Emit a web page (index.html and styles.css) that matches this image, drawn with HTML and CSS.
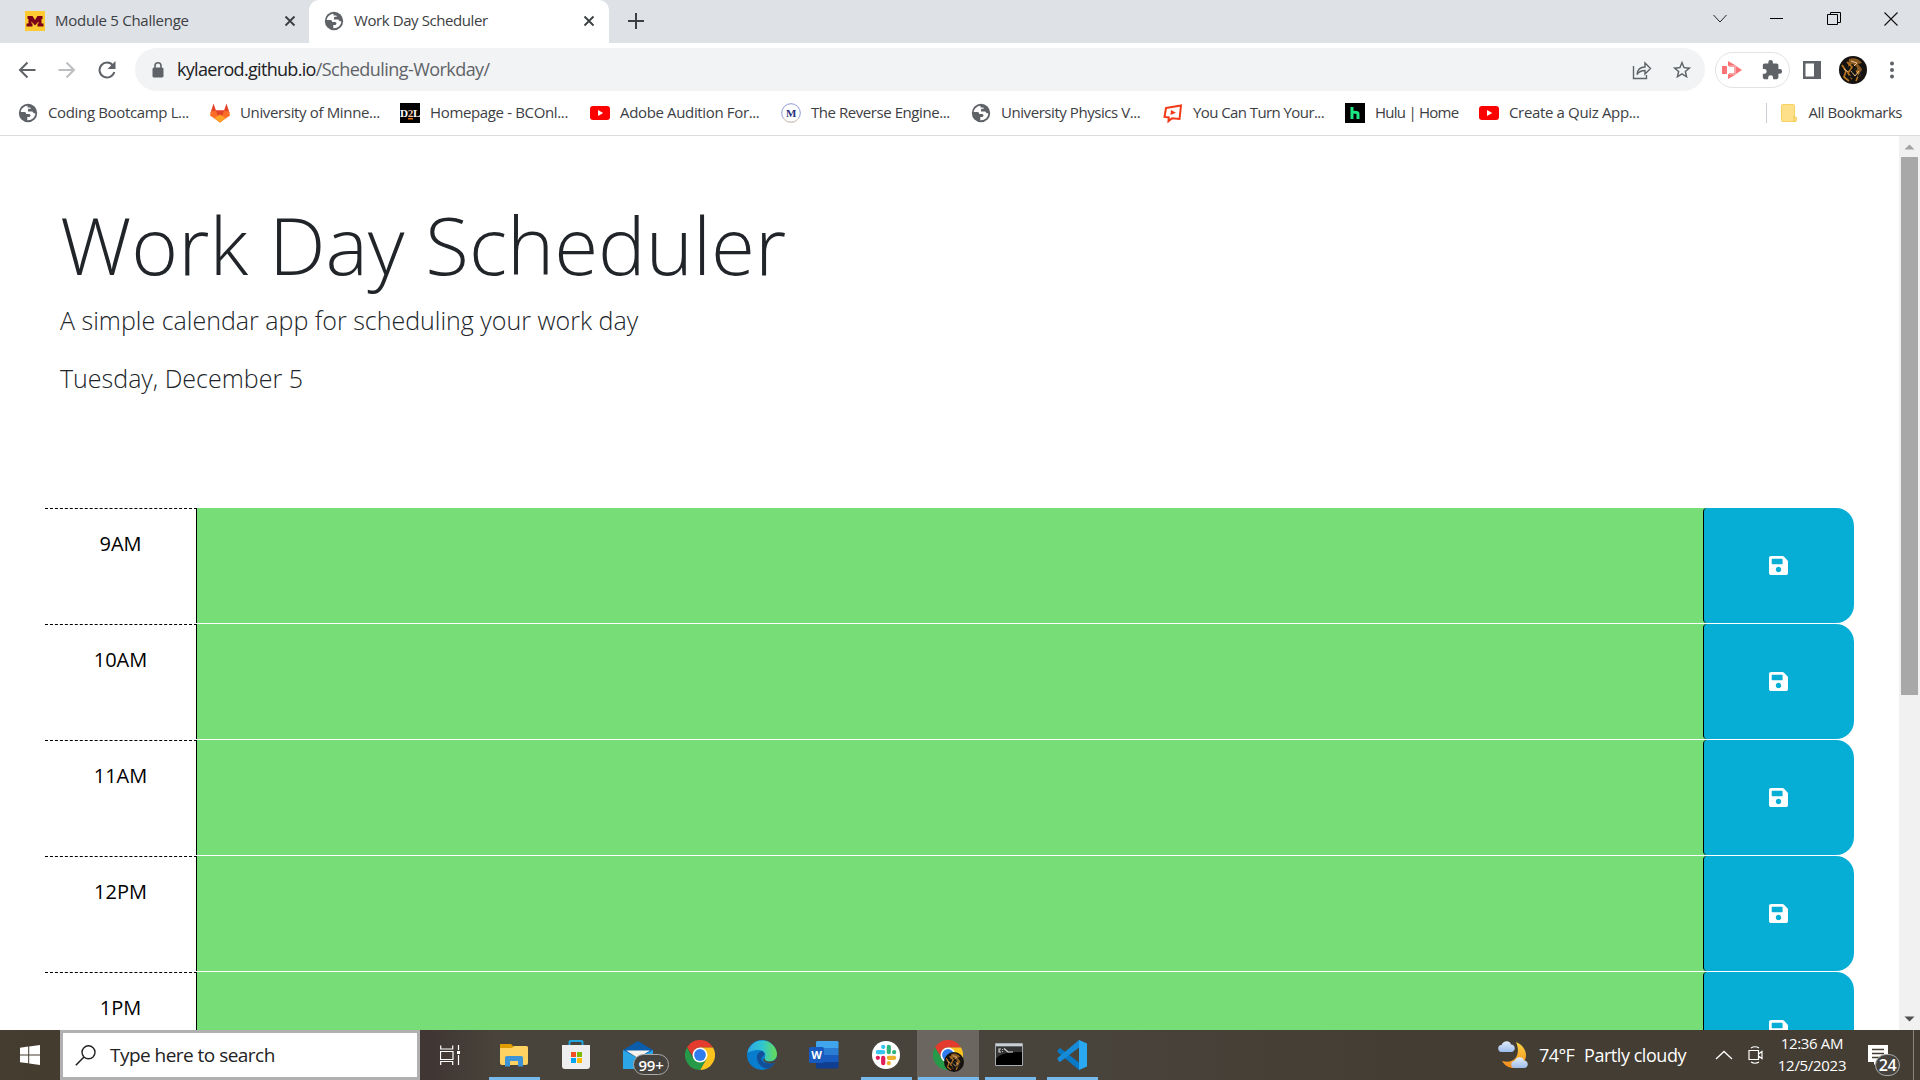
FILE: index.html
```html
<!DOCTYPE html>
<html lang="en">
<head>
<meta charset="utf-8">
<title>Work Day Scheduler</title>
<link rel="stylesheet" href="styles.css">
</head>
<body>
<svg class="defs" width="0" height="0" aria-hidden="true">
  <defs>
    <symbol id="globe" viewBox="0 0 20 20"><circle cx="10" cy="10" r="9.2" fill="#5f6368"/><path d="M9.5 2.700c-3.400.2-6.200 2.800-6.800 6.300h3.600c1.300 0 1.900.8 1.900 1.900h2.600c1 0 1.700.6 1.700 1.500s-.8 1.500-1.700 1.500h-1.500v3.300c4.500.3 7.900-3 8-7-.8.3-1.500.2-2-.4l-1-1.300H10V7c0-.8.5-1.200 1.300-1.200H13l-.8-1.400h-2.700z" fill="#fff"/></symbol>
    <symbol id="youtube" viewBox="0 0 20 20"><rect y="3" width="20" height="14" rx="3" fill="#f00"/><path d="M8 7v6l5.200-3z" fill="#fff"/></symbol>
    <symbol id="close" viewBox="0 0 12 12"><path d="M1.500 1.500l9 9m0-9l-9 9" stroke="#3c4043" stroke-width="1.900" fill="none"/></symbol>
    <symbol id="save" viewBox="0 32 448 448"><path fill="#fff" d="M433.941 129.941l-83.882-83.882A48 48 0 0 0 316.118 32H48C21.490 32 0 53.490 0 80v352c0 26.510 21.490 48 48 48h352c26.510 0 48-21.490 48-48V163.882a48 48 0 0 0-14.059-33.941zM224 416c-35.346 0-64-28.654-64-64s28.654-64 64-64 64 28.654 64 64-28.654 64-64 64zm96-304.520V212c0 6.627-5.373 12-12 12H76c-6.627 0-12-5.373-12-12V108c0-6.627 5.373-12 12-12h228.520c3.183 0 6.235 1.264 8.485 3.515l3.480 3.480A11.996 11.996 0 0 1 320 111.480z"/></symbol>
    <symbol id="chrome" viewBox="0 0 30 30"><path d="M2 7.500A15 15 0 0 1 28 7.500H15a7.500 7.500 0 0 0-6.500 3.750L8 16z" fill="#e33b2e"/><path d="M15 7.500h13A15 15 0 0 1 15 30l6.500-11.250z" fill="#fcc31e"/><path d="M2 7.500l6.500 11.250h13L15 30A15 15 0 0 1 2 7.500z" fill="#269a48"/><circle cx="15" cy="15" r="7.500" fill="#fff"/><circle cx="15" cy="15" r="5.900" fill="#2f7cf0"/></symbol>
    <symbol id="tiger" viewBox="0 0 28 28"><circle cx="14" cy="14" r="14" fill="#15120f"/><path d="M10 3c5-2 10 0 13 4l-4 1 4 5-2 8-4-5 1-5-5-3-4 3z" fill="#8a5a20"/><path d="M3 9l4 6-2 6 5 4M8 6l5 5-4 6 4 6m3-10l4 5-3 7" fill="none" stroke="#b9751f" stroke-width="1.700"/><path d="M12 5l6 2-3 3m5 5l-4 5-4-5M5 13l4 3" fill="none" stroke="#e6c191" stroke-width="1"/><path d="M6 10l5 3m2 3l5-3m1 8l4-6M10 20l4 2" stroke="#14181b" stroke-width="1.500"/></symbol>
    <linearGradient id="edgeTop" x2="1"><stop stop-color="#2fa5e4"/><stop offset=".5" stop-color="#30c5d2"/><stop offset="1" stop-color="#68dc50"/></linearGradient>
    <linearGradient id="moon" x2="0" y2="1"><stop stop-color="#ffd33f"/><stop offset="1" stop-color="#f28b1d"/></linearGradient>
    <linearGradient id="cloud" x2="0" y2="1"><stop stop-color="#e3edfc"/><stop offset="1" stop-color="#9dbdeb"/></linearGradient>
  </defs>
</svg>

<header class="browser">
  <div class="tabstrip">
    <div class="tab">
      <svg class="favicon" width="20" height="20" viewBox="0 0 20 20"><path fill="#ffcb33" d="M0 0h20v20H0z"/><path fill="#7a0019" d="M2.500 5h5L10 9l2.500-4h5v3h-1v4.500H18.500v3h-6v-3h1v-2L10 14.500l-3.500-4v2h1v3h-6v-3H3.500V8h-1z"/></svg>
      <span class="tab-title t-module">Module 5 Challenge</span>
      <svg class="tab-close" width="12" height="12"><use href="#close"/></svg>
    </div>
    <div class="tab tab-active">
      <svg class="favicon" width="20" height="20"><use href="#globe"/></svg>
      <span class="tab-title t-work">Work Day Scheduler</span>
      <svg class="tab-close" width="12" height="12"><use href="#close"/></svg>
    </div>
    <svg class="newtab" width="16" height="16" viewBox="0 0 16 16"><path d="M8 0v16M0 8h16" stroke="#3c4043" stroke-width="2"/></svg>
    <div class="window-controls">
      <svg width="14" height="14" viewBox="0 0 14 14"><path d="M.5 3L7 10l6.500-7" fill="none" stroke="#222"/></svg>
      <svg width="14" height="14" viewBox="0 0 14 14"><path d="M0 6.500h13" stroke="#000"/></svg>
      <svg width="14" height="14" viewBox="0 0 14 14"><path d="M.5 2.500h10v10H.5zM3.500 2V.5h10v10H11" fill="none" stroke="#000"/></svg>
      <svg width="14" height="14" viewBox="0 0 14 14"><path d="M.5.500l13 13m0-13l-13 13" stroke="#111" stroke-width="1.100"/></svg>
    </div>
  </div>
  <div class="toolbar">
    <div class="nav">
      <svg width="18" height="18" viewBox="0 0 18 18"><path d="M17.500 9H2m7.500-7.500L2 9l7.500 7.500" fill="none" stroke="#5f6368" stroke-width="2"/></svg>
      <svg width="18" height="18" viewBox="0 0 18 18"><path d="M.5 9H16M8.500 1.500L16 9l-7.500 7.500" fill="none" stroke="#bcbec1" stroke-width="2"/></svg>
      <svg width="18" height="18" viewBox="0 0 18 18"><path d="M15 4.500A7.500 7.500 0 1 0 16.300 11" fill="none" stroke="#5f6368" stroke-width="2"/><path d="M17.500 0v8H9.500z" fill="#5f6368"/></svg>
    </div>
    <div class="omnibox">
      <svg width="12" height="16" viewBox="0 0 12 16"><rect x=".5" y="5.500" width="11" height="10" rx="1.500" fill="#5f6368"/><path d="M3 6V3.800a3 3 0 0 1 6 0V6" fill="none" stroke="#5f6368" stroke-width="1.600"/></svg>
      <span class="url"><span class="host">kylaerod.github.io</span><span class="path">/Scheduling-Workday/</span></span>
      <svg class="share" width="20" height="20" viewBox="0 0 20 20"><path d="M1.500 6v12.500h13V15M5 14.500c.5-5 3-7.500 8-7.500V3l5.500 5.500L13 14v-3.500c-4 0-6 1-8 4z" fill="none" stroke="#5f6368" stroke-width="1.400"/></svg>
      <svg class="star" width="22" height="22" viewBox="0 0 24 24"><path fill="#5f6368" d="M22 9.240l-7.190-.62L12 2 9.190 8.630 2 9.240l5.460 4.730L5.820 21 12 17.270 18.180 21l-1.630-7.030L22 9.240zM12 15.400l-3.760 2.270 1-4.280-3.320-2.880 4.380-.38L12 6.100l1.710 4.040 4.380.38-3.320 2.880 1 4.280L12 15.400z"/></svg>
    </div>
    <div class="extensions">
      <svg width="20" height="18" viewBox="0 0 20 18"><path d="M0 5h5v8H0z" fill="#fa7477"/><path d="M6 0l7 4-7 1zm0 18l7-4-7-1zM14 5l6 4-6 4z" fill="#fa7477"/><path d="M7 5h6v8H7" fill="none" stroke="#fa8a8c" stroke-width="1.500"/></svg>
      <svg width="22" height="22" viewBox="0 0 24 24"><path fill="#5f6368" d="M20.500 11H19V7c0-1.100-.9-2-2-2h-4V3.500a2.500 2.500 0 0 0-5 0V5H4c-1.100 0-2 .9-2 2v3.800h1.500a2.700 2.700 0 0 1 0 5.400H2V20c0 1.100.9 2 2 2h3.800v-1.500a2.700 2.700 0 0 1 5.400 0V22H17c1.100 0 2-.9 2-2v-4h1.500a2.500 2.500 0 0 0 0-5z"/></svg>
    </div>
    <svg class="panel" width="18" height="18" viewBox="0 0 18 18"><path fill="#5f6368" fill-rule="evenodd" d="M0 0h18v18H0zM2.500 2.500v13H11v-13z"/></svg>
    <svg class="avatar" width="28" height="28"><use href="#tiger"/></svg>
    <svg class="dots" width="4" height="18" viewBox="0 0 4 18"><g fill="#5f6368"><circle cx="2" cy="2.500" r="2"/><circle cx="2" cy="9" r="2"/><circle cx="2" cy="15.500" r="2"/></g></svg>
  </div>
  <nav class="bookmarks">
    <a class="bm w192"><svg width="20" height="20"><use href="#globe"/></svg><span class="b1">Coding Bootcamp L...</span></a>
    <a class="bm w190"><svg width="20" height="20" viewBox="0 0 20 20"><path fill="#e24329" d="M3.500.5L6 7.500h8L16.500.5l3 9.500L10 19.500.5 10z"/><path fill="#fc6d26" d="M.8 8.500L6 7.500 10 19.500 0 12.500zM19.200 8.500L14 7.500 10 19.500l10-7z"/><path fill="#fca326" d="M10 19.500L4.500 15 10 11.500l5.500 3.500z"/><path fill="#e24329" d="M5.500 7.500h9L10 12z"/></svg><span class="b2">University of Minne...</span></a>
    <a class="bm w190"><svg width="20" height="20" viewBox="0 0 20 20"><path d="M0 0h20v20H0z"/><text x="0" y="14" class="d2l" textLength="20" lengthAdjust="spacingAndGlyphs">D<tspan>2</tspan>L</text><path d="M8 15h5v1.500H8z" fill="#e87511"/></svg><span class="b3">Homepage - BCOnl...</span></a>
    <a class="bm w191"><svg width="20" height="20"><use href="#youtube"/></svg><span class="b4">Adobe Audition For...</span></a>
    <a class="bm w190"><svg width="20" height="20" viewBox="0 0 20 20"><circle cx="10" cy="10" r="9.300" fill="#fff" stroke="#8d9ad6"/><path d="M2.500 15.500A9.300 9.300 0 0 0 17.500 15.500" fill="none" stroke="#ecd6b8"/><text x="10" y="14" text-anchor="middle" class="mletter">M</text></svg><span class="b5">The Reverse Engine...</span></a>
    <a class="bm w192"><svg width="20" height="20"><use href="#globe"/></svg><span class="b6">University Physics V...</span></a>
    <a class="bm w182"><svg width="20" height="20" viewBox="0 0 20 20"><path d="M3 5l15-2.500-1.500 13.500-7.500-.8-3.500 3 .3-3.700L1.500 14z" fill="none" stroke="#f03a17" stroke-width="2"/><path d="M8 7l5 2.700L7.500 12z" fill="#f03a17"/></svg><span class="b7">You Can Turn Your...</span></a>
    <a class="bm w134"><svg width="20" height="20" viewBox="0 0 20 20"><path d="M0 0h20v20H0z"/><path d="M7 4v12M7 10.500c0-1.500 6-2 6 .5v5" fill="none" stroke="#1ce783" stroke-width="3"/></svg><span class="b8">Hulu | Home</span></a>
    <a class="bm"><svg width="20" height="20"><use href="#youtube"/></svg><span class="b9">Create a Quiz App...</span></a>
    <a class="bm all"><svg width="16" height="18" viewBox="0 0 16 18"><path fill="#ffe08a" stroke="#f5d25e" d="M.5 1.500q0-1 1-1h11q1 0 1 1v11l2 1v3q0 1-1 1h-13q-1 0-1-1z"/><path d="M13 12v5.500" stroke="#eec64b"/></svg><span class="b10">All Bookmarks</span></a>
  </nav>
</header>

<div class="viewport">
  <main class="page">
    <div class="intro">
      <h1>Work Day Scheduler</h1>
      <p>A simple calendar app for scheduling your work day</p>
      <p>Tuesday, December 5</p>
    </div>
    <section class="schedule">
      <div class="row"><div class="hour">9AM</div><div class="slot"></div><div class="save-cell"><button><svg width="19" height="19"><use href="#save"/></svg></button></div></div>
      <div class="row"><div class="hour">10AM</div><div class="slot"></div><div class="save-cell"><button><svg width="19" height="19"><use href="#save"/></svg></button></div></div>
      <div class="row"><div class="hour">11AM</div><div class="slot"></div><div class="save-cell"><button><svg width="19" height="19"><use href="#save"/></svg></button></div></div>
      <div class="row"><div class="hour">12PM</div><div class="slot"></div><div class="save-cell"><button><svg width="19" height="19"><use href="#save"/></svg></button></div></div>
      <div class="row"><div class="hour">1PM</div><div class="slot"></div><div class="save-cell"><button><svg width="19" height="19"><use href="#save"/></svg></button></div></div>
    </section>
  </main>
  <div class="scrollbar">
    <svg width="21" height="21" viewBox="0 0 21 21"><path d="M5.500 13.500h10l-5-5z" fill="#a3a3a3"/></svg>
    <div class="thumb"></div>
    <svg class="down" width="21" height="21" viewBox="0 0 21 21"><path d="M5.500 7.500h10l-5 5z" fill="#505050"/></svg>
  </div>
</div>

<footer class="taskbar">
  <div class="start"><svg width="20" height="20" viewBox="0 0 20 20"><path fill="#fff" d="M0 2.700L8.200 1.600V9.400H0zM9.200 1.400L20 0v9.400H9.200zM0 10.400h8.200v7.900L0 17.200zM9.200 10.400H20V20L9.200 18.500z"/></svg></div>
  <div class="search"><svg width="21" height="21" viewBox="0 0 21 21"><circle cx="13.500" cy="7.300" r="6.500" fill="none" stroke="#222" stroke-width="1.400"/><path d="M9 12L.8 20.200" stroke="#222" stroke-width="1.600"/></svg><span>Type here to search</span></div>
  <div class="taskview"><svg width="21" height="20" viewBox="0 0 21 20"><path d="M.7.500V4h12V.5M.5 6.500h12.500v8H.5zM.7 20v-3.500h12V20M18.500 0v5M18.500 10v10" fill="none" stroke="#fff" stroke-width="1.200"/><path d="M17 6h3v3h-3z" fill="#fff"/></svg></div>
  <div class="apps">
    <div class="app open"><svg width="28" height="24" viewBox="0 0 28 24"><path d="M0 1h11l3 3v4H0z" fill="#e19c00"/><path d="M0 5h12l2-2h12.500q1.500 0 1.500 1.500V20q0 2-2 2H2q-2 0-2-2z" fill="#ffd262"/><path d="M5 23.500V15q0-2 2-2h14q2 0 2 2v8.500h-5V18h-8v5.500z" fill="#3d94d6"/></svg></div>
    <div class="app"><svg width="30" height="30" viewBox="0 0 30 30"><path d="M8.500 8V2q0-1 1-1h11q1 0 1 1v6" fill="none" stroke="#23a4dd" stroke-width="2"/><path d="M1 5h28v21q0 3-3 3H4q-3 0-3-3z" fill="#eee"/><path d="M10 12h5v5h-5z" fill="#f25022"/><path d="M16 12h5v5h-5z" fill="#7fba00"/><path d="M10 18h5v5h-5z" fill="#00a4ef"/><path d="M16 18h5v5h-5z" fill="#ffb900"/></svg></div>
    <div class="app"><svg width="30" height="30" viewBox="0 0 30 30"><path d="M0 10L15 1l15 9v4H0z" fill="#0b5cab"/><path d="M0 10l15 8 15-8v19H0z" fill="#2ba5e6"/><path d="M3 10.500h24L15 18z" fill="#f6f3f0"/></svg><span class="badge mail-badge">99+</span></div>
    <div class="app"><svg width="30" height="30"><use href="#chrome"/></svg></div>
    <div class="app"><svg width="30" height="30" viewBox="0 0 30 30"><circle cx="15" cy="15" r="15" fill="#087dcd"/><path d="M.3 13A15 15 0 0 1 30 14c0 5-4 7.500-8 7.500-3.500 0-5.500-1.500-4.500-3.500C20 13 16 9.500 11 10 6 10 2 12 .3 13z" fill="url(#edgeTop)"/><path d="M15 11c-5 1-6.500 6-4 11 2 4 5.500 6.500 10 6.800 3-1.300 5.500-3.800 7-7-5 3-12 2-13.500-2-.8-2.500 1.500-4 3-5-.5-2-1-3-2.500-3.800z" fill="#124f96"/><path d="M30.500 15c-1 5.500-5 7-9 6.500-4-.5-4-2.500-3.300-3.800l-2.200 2c1.500 4 8.500 5 13.500 2h1z" fill="#48443d"/></svg></div>
    <div class="app"><svg width="30" height="28" viewBox="0 0 30 28"><path fill="#41a5ee" d="M8 0h20q1.500 0 1.500 1.500V7H7V1z"/><path fill="#2b7cd3" d="M7 7h22.500v7H7z"/><path fill="#185abd" d="M7 14h22.500v7H7z"/><path fill="#103f91" d="M7 21h22.500v5q0 1.500-1.500 1.500H8.500Q7 27.500 7 26z"/><rect x="0" y="6" width="15" height="16" rx="1.500" fill="#185abd"/><text x="7.500" y="18" text-anchor="middle" class="wletter">W</text></svg></div>
    <div class="app open"><svg width="28" height="28" viewBox="0 0 28 28"><circle cx="14" cy="14" r="14" fill="#fff"/><g stroke-width="4.200" stroke-linecap="round"><path d="M11.200 5.800v.1M5.800 11.200h5.400" stroke="#36c5f0"/><path d="M16.800 5.800v5.400M22.200 11.200h-.1" stroke="#2eb67d"/><path d="M16.800 16.800h5.400M16.800 22.200v-.1" stroke="#ecb22e"/><path d="M11.200 16.800v5.400M5.800 16.800h.1" stroke="#e01e5a"/></g></svg></div>
    <div class="app open active"><svg width="30" height="30"><use href="#chrome"/></svg><svg class="mini" width="20" height="20" viewBox="0 0 28 28"><use href="#tiger"/></svg></div>
    <div class="app open"><svg class="cmd" width="28" height="23" viewBox="0 0 28 23"><path d="M.5.500h27v22H.5z" fill="#000" stroke="#a5abb0"/><path d="M1 1h26v2.500H1z" fill="#c9d0d4"/><path d="M1 4h26v5Q5 9 1 16z" fill="#343434"/><path d="M6 6H4v3h2M7.500 6v.8m0 1.400V9M9 5.500l4 3.500h5" fill="none" stroke="#ddd" stroke-width="1.100"/></svg></div>
    <div class="app open"><svg width="30" height="30" viewBox="0 0 30 30"><path d="M1 9.500L3 8l19 14.500V30L.5 12z" fill="#0879c5"/><path d="M1 20.500L3 22 22 7.500V0L.5 18z" fill="#168bd8"/><path d="M22 0l8 3.500v23L22 30z" fill="#2aa8f2"/></svg></div>
  </div>
  <div class="weather"><svg width="31" height="30" viewBox="0 0 31 30"><path d="M18 2c12 5 13 18 4 24-6 4-14 2-18-5 14 4 19-8 14-19z" fill="url(#moon)"/><path d="M4 12a3.500 3.500 0 0 1-.5-7C5 0 12 0 13 4.500c5 0 5 7.500 0 7.500z" fill="url(#cloud)"/><path d="M17 28a3.500 3.500 0 0 1-.5-7c1.500-5 8.500-5 9.500-.5 5 0 5 7.500 0 7.500z" fill="url(#cloud)"/></svg><span class="temp">74°F</span><span class="sky">Partly cloudy</span></div>
  <svg class="chev" width="18" height="10" viewBox="0 0 18 10"><path d="M1 9l8-7.500L17 9" fill="none" stroke="#fff" stroke-width="1.300"/></svg>
  <svg class="meet" width="16" height="18" viewBox="0 0 16 18"><path d="M1 4.500h9.500v9H1zM10.500 8l3.500-2.500v7L10.500 10M3 2q4-2.500 8 0M3 16q4 2.500 8 0" fill="none" stroke="#fff" stroke-width="1.200"/></svg>
  <div class="clock"><span class="time">12:36 AM</span><span class="date">12/5/2023</span></div>
  <div class="notify"><svg width="20" height="20" viewBox="0 0 20 20"><path d="M0 0h20v17H9l-3 3v-3H0z" fill="#fff"/><path d="M4 4.500h12M4 8.500h12M4 12.500h7" stroke="#443d33" stroke-width="1.300"/></svg><span class="badge notify-badge">24</span></div>
  <div class="peek"></div>
</footer>
</body>
</html>
```
FILE: styles.css
```css
* { box-sizing: border-box; }
body {
  margin: 0;
  width: 1920px;
  height: 1080px;
  overflow: hidden;
  display: flex;
  flex-direction: column;
  background: #fff;
  font-family: "Open Sans", "Noto Sans", sans-serif;
  color: #3c4043;
}
svg { display: block; flex: none; }
.defs { height: 0; }
span { white-space: nowrap; }

/* Browser frame */
.browser { flex: none; height: 136px; border-bottom: 1px solid #dadce0; }
.tabstrip { display: flex; height: 43px; background: #dee1e6; }
.tab { display: flex; align-items: center; width: 309px; padding: 0 13px 1px 25px; border-radius: 0 0 10px 0; }
.tab-active { width: 300px; padding: 0 14px 1px 15px; background: #fff; border-radius: 10px 10px 0 0; }
.tab-title { flex: 1; margin-left: 10px; padding-bottom: 2px; font-size: 15px; }
.t-module { letter-spacing: -.25px; }
.t-work { letter-spacing: -.42px; }
.newtab { margin: 13px 0 0 19px; }
.window-controls { display: flex; gap: 43px; margin: 12px 22px 0 auto; }

.toolbar { display: flex; align-items: center; height: 53px; }
.nav { display: flex; gap: 22px; width: 135px; padding-left: 18px; }
.omnibox { display: flex; align-items: center; width: 1570px; height: 43px; padding: 0 12px 0 17px; border-radius: 22px; background: #f1f3f4; }
.url { flex: 1; margin-left: 13px; padding-bottom: 1px; font-size: 18px; }
.host { color: #202124; letter-spacing: -.68px; }
.path { color: #5f6368; letter-spacing: -.55px; }
.share { margin-right: 19px; }
.extensions { display: flex; align-items: center; justify-content: space-between; width: 75px; height: 36px; margin: 0 13px 0 10px; padding: 0 6px; border: 1px solid #e0e2e5; border-radius: 18px; }
.avatar { margin: 0 23px 0 18px; }

.bookmarks { display: flex; height: 34px; padding-left: 18px; }
.bm { display: flex; align-items: center; gap: 10px; font-size: 15px; letter-spacing: -.35px; }
.bm span { padding-bottom: 2px; }
.b5, .b6 { letter-spacing: -.44px; }
.b7 { letter-spacing: -.58px; }
.b8 { letter-spacing: -.75px; }
.b10 { letter-spacing: -.5px; }
.w134 { width: 134px; }
.w182 { width: 182px; }
.w190 { width: 190px; }
.w191 { width: 191px; }
.w192 { width: 192px; }
.all { height: 20px; margin: 7px 18px 0 auto; padding-left: 14px; border-left: 1px solid #c9ccd0; gap: 12px; }
.d2l { font: 700 11px "Liberation Serif", serif; fill: #fff; }
.d2l tspan { fill: #f6c9a0; }
.mletter { font: 700 11px "Liberation Serif", serif; fill: #27317b; }

/* Page */
.viewport { display: flex; flex: 1; min-height: 0; overflow: hidden; }
.page { width: 1899px; padding: 0 45px; }
.intro { height: 372px; padding: 60px 15px 0; color: #212529; }
h1 { margin: 0; font-size: 80px; font-weight: 300; line-height: 96px; }
.intro p { margin: 9px 0 20px; font-size: 25px; font-weight: 300; line-height: 38px; }
.intro p + p { margin: 0; }
.row { display: flex; height: 116px; }
.hour { width: 152px; height: 115px; padding-top: 20px; border-top: 1px dashed #000; border-right: 1px solid #000; font-size: 20px; line-height: 30px; text-align: center; color: #000; }
.slot { flex: 1; height: 115px; background: #77dd77; }
.save-cell { width: 151px; height: 115px; background: linear-gradient(to right, #77dd77 8px, #fff 8px); }
.save-cell button { display: flex; align-items: center; justify-content: center; width: 100%; height: 100%; padding: 0 1px 0 0; border: 0; border-left: 1px solid #000; border-radius: 4px 18px 18px 4px; background: #06aed5; }
.scrollbar { display: flex; flex-direction: column; width: 21px; background: #f1f1f1; }
.thumb { width: 17px; height: 538px; margin-left: 2px; background: #a8a8a8; }
.down { margin-top: auto; }

/* Taskbar */
.taskbar { display: flex; align-items: center; flex: none; height: 50px; background: linear-gradient(to right, #453d2f 0, #403633 430px, #49443b 500px, #48433b 1100px, #443d33 1400px); color: #fff; }
.start { display: flex; justify-content: center; width: 60px; }
.search { display: flex; align-items: center; gap: 14px; width: 360px; height: 50px; padding-left: 12px; border: 3px solid #b0b0b0; background: #fff; color: #222; font-size: 19px; letter-spacing: -.53px; }
.taskview { width: 63px; padding-left: 20px; }
.apps { display: flex; }
.app { position: relative; display: flex; align-items: center; justify-content: center; width: 62px; height: 50px; }
.open { background: linear-gradient(#76b9ed, #76b9ed) center bottom / 51px 3px no-repeat; }
.active { background-size: 61px 3px; background-color: #6b6760; }
.cmd { margin: 0 2px 2px 0; }
.mini { position: absolute; left: 27px; top: 22px; }
.badge { position: absolute; display: flex; align-items: center; justify-content: center; border: 1px solid #aaa; background: #46423d; font-weight: 600; }
.mail-badge { left: 26px; top: 24px; width: 36px; height: 21px; border-radius: 11px; font-size: 15px; letter-spacing: -.3px; }
.wletter { font: 700 11px "Open Sans", sans-serif; fill: #fff; }
.weather { display: flex; align-items: center; width: 188px; margin-left: 395px; font-size: 18px; }
.weather span { flex: none; }
.temp { width: 45px; margin-left: 10px; letter-spacing: -.6px; }
.sky { letter-spacing: -.45px; }
.chev { margin-left: 29px; }
.meet { margin-left: 15px; }
.clock { display: flex; flex-direction: column; align-items: center; width: 68px; margin: 0 0 2px 14px; font-size: 15px; line-height: 22px; }
.time { letter-spacing: -.35px; }
.date { letter-spacing: -.3px; }
.notify { position: relative; margin-left: 22px; }
.notify-badge { left: 7px; top: 9px; width: 25px; height: 22px; border-radius: 11px; font-size: 16px; letter-spacing: -.5px; }
.peek { width: 1px; height: 50px; margin-left: 25px; background: #8a867e; }
```
